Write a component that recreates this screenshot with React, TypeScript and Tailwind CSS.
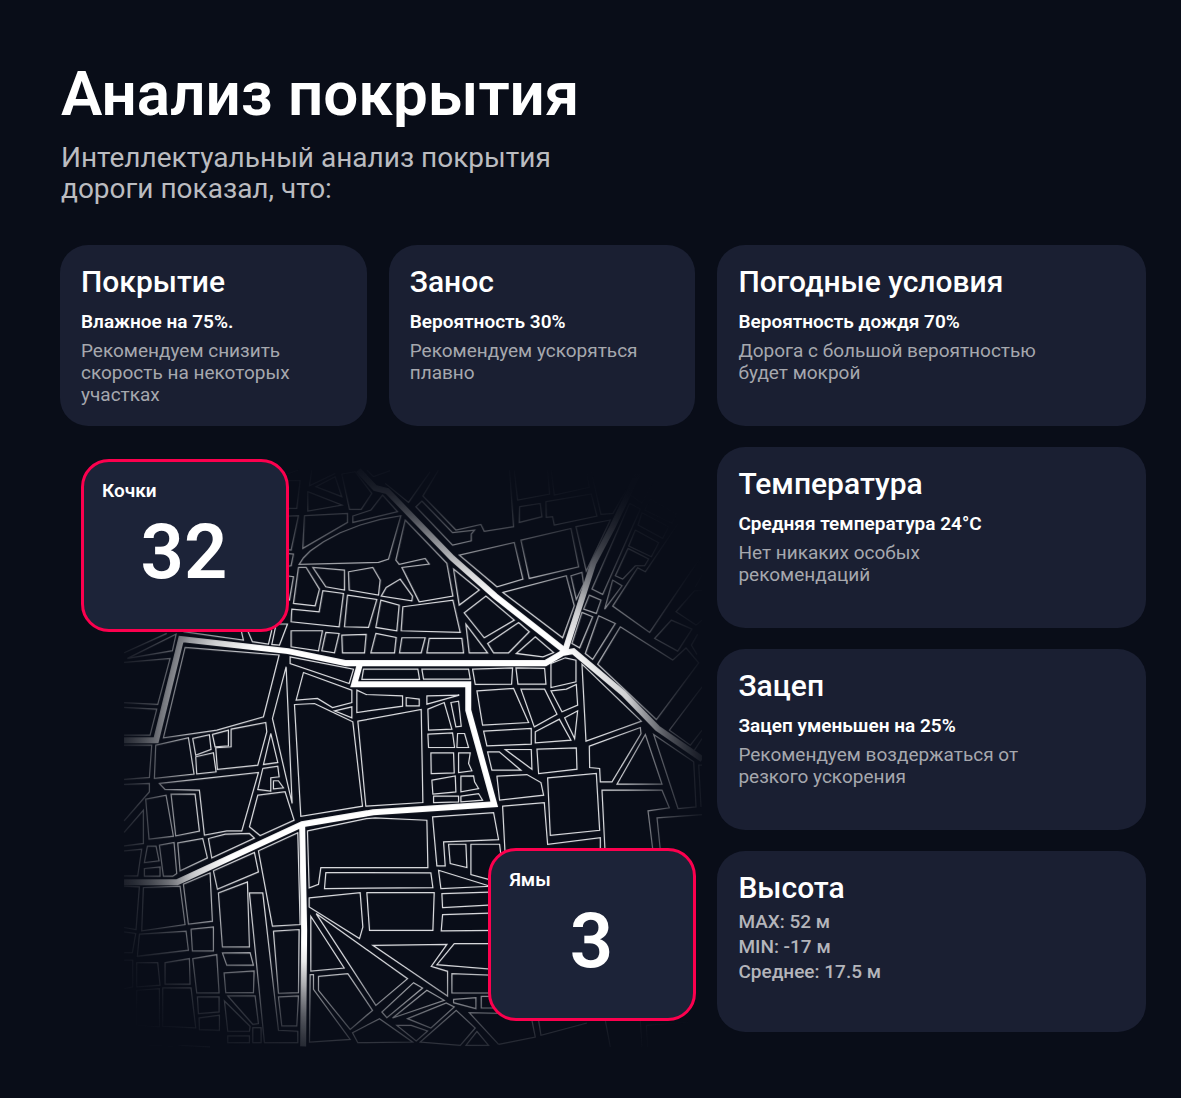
type Tile = { x: number; y: number; blocks: string[]; lines?: string[] };

/* City blocks, grouped by map sheet. Each sheet is drawn at three units per map unit. */
const tiles: Tile[] = [
  {
    x: 120,
    y: 630,
    blocks: [
      "22,85 168,12 157,62",
      "195,52 477,75 430,260 290,300 130,323",
      "107,345 205,323 222,432 103,445",
      "218,325 268,314 273,358 227,375",
      "227,380 280,368 288,425 230,431",
      "277,313 325,300 325,347 285,350",
      "287,353 333,350 333,297 437,277 440,305 413,405 292,418",
      "452,310 473,397 430,403",
      "498,110 457,265 516,520",
      "428,415 473,408 477,440 452,443 452,483 413,478",
      "460,452 475,452 490,473 460,476",
      "413,495 495,485 522,570 420,616 388,590",
      "118,460 415,427 365,602 320,602 253,615 238,480 135,478",
      "77,507 138,495 160,618 87,627",
      "153,492 225,492 238,603 167,617",
      "468,-18 502,-18 478,45 455,43",
    ],
    lines: [
      "12,68 140,10",
      "12,97 150,85 113,223 12,218",
      "12,232 110,237 90,315 12,315",
      "12,345 95,345 88,442 12,448",
      "12,463 88,460 88,485 12,572",
      "12,607 70,540 70,640 12,647",
      "190,5 370,30 363,0",
      "382,0 397,35 445,42 455,0",
    ],
  },
  {
    x: 120,
    y: 830,
    blocks: [
      "265,25 315,12 388,10 403,24 275,83",
      "82,48 108,48 117,92 73,97",
      "73,115 120,110 120,138 73,138",
      "118,45 162,37 170,130 158,138 130,138",
      "173,38 248,25 262,83 180,122",
      "280,122 403,67 415,125 292,177",
      "190,162 270,128 277,273 205,282",
      "295,188 382,155 388,350 307,350",
      "415,62 533,8 540,283 457,288",
      "388,188 428,188 475,600 533,603 533,637 433,637",
      "460,303 537,298 535,487 475,489",
      "475,500 535,497 530,587 485,587",
      "70,172 180,168 195,283 65,302",
      "58,312 198,303 205,360 52,378",
      "213,297 280,290 280,362 217,362",
      "218,385 290,373 297,488 230,488",
      "135,397 208,385 210,462 135,462",
      "50,397 113,397 120,465 50,470",
      "128,473 213,473 227,593 128,588",
      "50,480 118,475 118,590 50,585",
      "232,500 297,500 297,545 235,550",
      "237,563 298,555 298,600 238,598",
      "307,368 390,367 400,405 320,405",
      "312,428 402,422 400,487 317,487",
      "323,497 405,497 415,580 398,582",
      "313,512 390,588 388,603 323,603",
      "323,617 388,617 388,637 323,637",
      "398,592 423,592 423,637 398,637",
    ],
    lines: [
      "12,62 65,57 53,137 12,137",
      "12,168 58,170 48,298 12,292",
      "12,305 47,310 37,367 12,367",
      "12,390 38,390 38,470 12,475",
      "70,645 160,648",
      "175,645 270,650",
    ],
  },
  {
    x: 280,
    y: 460,
    blocks: [
      "22,62 60,62 50,145 22,145",
      "107,80 165,50 185,110",
      "83,95 185,135 83,153",
      "185,42 225,35 275,100 243,148 208,148",
      "20,168 55,167 33,270 20,268",
      "73,167 202,160 202,187 68,265",
      "218,168 272,150 307,105 352,155 218,187",
      "57,313 70,293 90,273 130,245 180,218 240,195 300,178 362,167 325,297 295,307",
      "20,280 40,282 33,317 20,318",
      "20,347 40,350 28,420 20,418",
      "55,322 78,322 118,387 105,437 40,430",
      "98,322 193,330 193,390 137,380",
      "205,335 278,322 300,360 295,405 207,390",
      "303,408 318,382 360,357 397,408 395,422",
      "35,447 117,455 128,392 190,400 177,500 33,485",
      "202,405 290,418 265,502 193,500",
      "302,420 357,435 350,512 287,502",
      "368,440 518,420 540,517 363,512",
      "375,180 500,310 518,408 417,425 365,322 447,312 435,295 357,313 347,300",
      "520,327 597,390 537,435",
      "33,512 127,512 115,572 33,560",
      "137,517 177,520 163,578 125,572",
      "185,525 258,523 253,578 187,578",
      "287,520 348,532 343,578 272,578",
      "365,533 435,533 423,578 358,578",
      "447,535 545,535 550,578 440,578",
      "557,492 622,578 567,578",
      "552,458 617,408 702,480 612,533",
      "622,550 715,487 747,515 685,578 640,578",
      "425,123 517,218 583,210 573,222 573,242 517,255 407,140",
      "537,285 702,247 728,357 650,380",
    ],
    lines: [
      "20,42 55,30",
      "95,30 88,77 165,40",
      "260,30 280,50 330,32",
      "315,70 385,127 450,35",
      "475,30 428,108 527,210 602,193 612,214 700,200 688,30",
    ],
  },
  {
    x: 490,
    y: 460,
    blocks: [
      "88,140 150,130 155,170 87,187",
      "167,125 303,102 320,168 192,195 187,170 168,172",
      "92,240 242,205 265,320 117,355",
      "257,200 360,180 288,333",
      "242,347 275,337 280,372 258,418",
      "38,397 228,347 252,437 217,533",
      "418,130 450,147 337,403 305,387",
      "480,117 558,162 545,190 463,150",
      "455,158 535,200 517,235 443,195",
      "435,210 505,248 483,290 415,258",
      "413,265 475,297 463,317 435,317 397,357 375,347",
      "297,405 332,420 318,460 280,447",
      "343,447 367,360 395,377",
      "275,457 307,470 268,563 245,550",
      "325,467 375,490 307,598 285,580",
      "390,500 322,612 498,778 625,608 587,563 547,600",
      "543,480 605,507 562,573 493,535",
      "78,580 135,530 190,577 158,590",
    ],
    lines: [
      "72,30 82,120 178,102 172,30",
      "183,30 192,105 297,82 288,30",
      "302,30 332,163 368,160 430,50",
      "635,285 478,517 367,438 442,323 465,335 570,180",
      "635,392 612,392 557,455 617,495 635,480",
      "615,380 635,345",
      "622,522 603,555 620,583",
      "420,105 455,130 485,70",
    ],
  },
  {
    x: 280,
    y: 650,
    blocks: [
      "30,20 220,57 207,100 30,40",
      "70,67 215,120 215,157 157,172 112,145 48,150",
      "163,182 215,170 215,203",
      "43,163 103,160 218,215 247,468 62,498",
      "230,120 258,133 367,137 367,168 230,187",
      "378,142 417,147 417,167 378,167",
      "440,137 537,135 440,162",
      "250,57 413,57 418,88 245,88",
      "425,57 565,57 570,87 430,87",
      "577,57 697,53 694,102 585,103",
      "233,213 423,178 428,457 257,468",
      "443,177 492,157 515,237 445,240",
      "512,157 535,153 543,228 527,230",
      "443,252 517,248 523,292 445,292",
      "532,250 553,250 565,292 530,292",
      "452,308 520,308 522,368 453,370",
      "535,308 570,308 565,340 575,362 535,367",
      "455,390 525,377 527,425 458,432",
      "542,378 580,377 583,395 595,415 542,425",
      "460,438 535,438 535,455 460,457",
      "542,438 595,430 607,450 542,455",
      "590,122 700,115 745,217 607,225",
      "610,243 753,235 753,282 620,287",
      "622,305 657,305 722,360 635,360",
      "82,542 258,505 285,503 440,510 443,652 122,652 115,702 87,713",
      "457,500 640,487 655,568 490,575 495,647 470,647",
      "505,582 557,582 560,652 510,640",
      "572,582 658,582 672,700 572,673",
    ],
  },
  {
    x: 490,
    y: 650,
    blocks: [
      "77,53 163,55 167,102 83,102",
      "182,40 225,23 257,30 257,95 182,112",
      "182,122 228,117 258,103 262,165 215,185",
      "92,117 163,117 200,192 132,230",
      "135,245 207,207 242,270 135,278",
      "223,203 262,182 253,265",
      "45,298 123,298 125,357",
      "140,297 258,293 260,357 145,370",
      "20,378 110,373 152,397 160,435 28,450",
      "275,42 453,213 287,273",
      "297,288 450,232 452,250 365,395 330,395 328,355 298,352",
      "465,253 515,402 380,402",
      "172,383 318,370 328,540 180,555",
      "37,468 162,457 172,582 330,562 330,620 45,620",
      "335,420 515,420 537,473 473,482 490,620 345,620",
      "490,253 610,335 617,470 563,475",
    ],
    lines: [
      "635,345 625,345 632,470",
      "635,493 500,503 512,620",
      "635,110 537,240 600,285 635,240",
      "612,300 635,265",
    ],
  },
  {
    x: 290,
    y: 840,
    blocks: [
      "107,97 422,98 428,142 103,145",
      "445,90 600,138 452,145",
      "57,173 210,157 218,260 208,295 57,200",
      "230,157 432,157 428,270 238,270",
      "62,228 162,383 62,392",
      "78,220 352,415 257,495",
      "248,315 470,312 423,378 472,393 472,467",
      "85,408 173,400 247,510 180,567 85,450",
      "60,403 70,403 70,447 180,597 58,605",
      "370,427 397,443 290,532 275,515",
      "410,450 462,480 307,533",
      "352,535 468,488 492,500 422,563",
      "498,510 555,563 510,615 390,605",
      "268,535 367,605 203,607 187,577",
      "320,555 363,555 412,572 378,602",
      "490,477 557,472 557,505 490,487",
      "560,573 595,615 527,615",
    ],
    lines: [
      "620,155 455,160 457,202 620,193",
      "620,218 457,223 453,272 620,270",
      "620,310 492,310 440,373 620,388",
      "620,405 485,400 485,458 620,458",
      "620,468 573,468 573,503 620,503",
      "660,520 537,517 625,612",
      "725,540 735,590 625,612",
      "745,540 752,585 890,548",
      "945,540 960,620",
      "1050,540 1055,620",
      "1200,545 1068,555 1072,620",
    ],
  },
];

const roads = [
  "124,740 156,740 181,639 288,651 346,663 545,663 562,653 573,651 580,657 623,693 657,728 702,759",
  "358,470 375,488 387,491 452,558 495,596 565,651",
  "638,473 612,527 593,563 565,650",
  "360,663 354,684 468,684 468,710 494,804 373,812 302,824 177,882 124,882",
  "302,824 304,930 303,1046",
];

function RoadMap() {
  return (
    <svg
      viewBox="60 447 635 585"
      className="block h-full w-full overflow-visible"
      fill="none"
      stroke="white"
      role="img"
      aria-label="Карта дорог"
    >
      <defs>
        <radialGradient id="fade" gradientUnits="userSpaceOnUse" cx="408" cy="775" r="360">
          <stop offset="0.55" stopColor="#fff" />
          <stop offset="0.65" stopColor="#fff" stopOpacity="0.8" />
          <stop offset="0.73" stopColor="#fff" stopOpacity="0.52" />
          <stop offset="0.82" stopColor="#fff" stopOpacity="0.28" />
          <stop offset="0.92" stopColor="#fff" stopOpacity="0.12" />
          <stop offset="1" stopColor="#fff" stopOpacity="0.04" />
        </radialGradient>
        <linearGradient id="fade-y" gradientUnits="userSpaceOnUse" x1="0" y1="460" x2="0" y2="1050">
          <stop offset="0" stopOpacity="0.95" />
          <stop offset="0.06" stopOpacity="0.75" />
          <stop offset="0.12" stopOpacity="0.4" />
          <stop offset="0.19" stopOpacity="0.1" />
          <stop offset="0.23" stopOpacity="0" />
          <stop offset="0.85" stopOpacity="0" />
          <stop offset="1" stopOpacity="0.65" />
        </linearGradient>
        <linearGradient id="fade-x" gradientUnits="userSpaceOnUse" x1="120" y1="0" x2="702" y2="0">
          <stop offset="0" stopOpacity="0.7" />
          <stop offset="0.12" stopOpacity="0" />
          <stop offset="0.87" stopOpacity="0" />
          <stop offset="1" stopOpacity="0.8" />
        </linearGradient>
        <mask id="vignette" maskUnits="userSpaceOnUse" x="120" y="460" width="582" height="590">
          <g stroke="none">
            <rect x="120" y="460" width="582" height="590" fill="url(#fade)" />
            <rect x="120" y="460" width="582" height="590" fill="url(#fade-y)" />
            <rect x="120" y="460" width="582" height="590" fill="url(#fade-x)" />
          </g>
        </mask>
      </defs>
      <g mask="url(#vignette)">
        {tiles.map((t) => (
          <g
            key={`${t.x}-${t.y}`}
            transform={`translate(${t.x} ${t.y}) scale(0.33333)`}
            stroke="#e4e5e8"
            strokeWidth="3.6"
          >
            {t.blocks.map((p) => (
              <polygon key={p} points={p} />
            ))}
            {t.lines?.map((p) => (
              <polyline key={p} points={p} />
            ))}
          </g>
        ))}
        {roads.map((p) => (
          <polyline key={p} points={p} strokeWidth="6" />
        ))}
      </g>
    </svg>
  );
}

function Card({ title, lead, lines }: { title: string; lead: string; lines: string[] }) {
  return (
    <section className="min-h-[181px] rounded-[28px] bg-[#1a1f32] px-[21px] pt-5 pb-4">
      <h2 className="text-[30px] leading-[34px] font-medium">{title}</h2>
      <p className="mt-3 text-[19px] leading-[22px] font-semibold">{lead}</p>
      <p className="mt-[7px] text-[19px] leading-[22px] text-[#a6a8ae]">
        {lines.map((l) => (
          <span key={l} className="block">
            {l}
          </span>
        ))}
      </p>
    </section>
  );
}

function Counter({ label, value }: { label: string; value: number }) {
  return (
    <section className="h-[173px] w-52 rounded-[28px] border-3 border-[#fc004e] bg-[#1c2338] pt-[18px] pr-5 pl-[18px]">
      <h3 className="text-[19px] leading-[22px] font-semibold">{label}</h3>
      <p className="mt-[10px] text-center text-[76px] leading-[80px] font-semibold">{value}</p>
    </section>
  );
}

export default function App() {
  return (
    <main className="min-h-screen bg-[#090d18] pt-14 pr-[35px] pb-16 pl-15 font-['Roboto',sans-serif] text-white">
      <header className="px-px">
        <h1 className="text-[62px] leading-[75px] font-semibold">Анализ покрытия</h1>
        <p className="mt-[11px] text-[28px] leading-[31px] text-[#bbbcc0]">
          Интеллектуальный анализ покрытия
          <br />
          дороги показал, что:
        </p>
      </header>
      <div className="mt-[41px] grid grid-cols-[307fr_307fr_429fr] gap-x-[22px] gap-y-[21px]">
        <Card
          title="Покрытие"
          lead="Влажное на 75%."
          lines={["Рекомендуем снизить", "скорость на некоторых", "участках"]}
        />
        <Card title="Занос" lead="Вероятность 30%" lines={["Рекомендуем ускоряться", "плавно"]} />
        <Card
          title="Погодные условия"
          lead="Вероятность дождя 70%"
          lines={["Дорога с большой вероятностью", "будет мокрой"]}
        />
        <div className="relative col-span-2 row-span-3">
          <RoadMap />
          <div className="absolute top-3 left-[21px]">
            <Counter label="Кочки" value={32} />
          </div>
          <div className="absolute -right-px bottom-[11px]">
            <Counter label="Ямы" value={3} />
          </div>
        </div>
        <Card
          title="Температура"
          lead="Средняя температура 24°C"
          lines={["Нет никаких особых", "рекомендаций"]}
        />
        <Card
          title="Зацеп"
          lead="Зацеп уменьшен на 25%"
          lines={["Рекомендуем воздержаться от", "резкого ускорения"]}
        />
        <section className="min-h-[181px] rounded-[28px] bg-[#1a1f32] px-[21px] pt-5 pb-4">
          <h2 className="text-[30px] leading-[34px] font-medium">Высота</h2>
          <ul className="mt-1 text-[19px] leading-[25px] font-medium text-[#b4b5bb]">
            <li>MAX: 52 м</li>
            <li>MIN: -17 м</li>
            <li>Среднее: 17.5 м</li>
          </ul>
        </section>
      </div>
    </main>
  );
}
